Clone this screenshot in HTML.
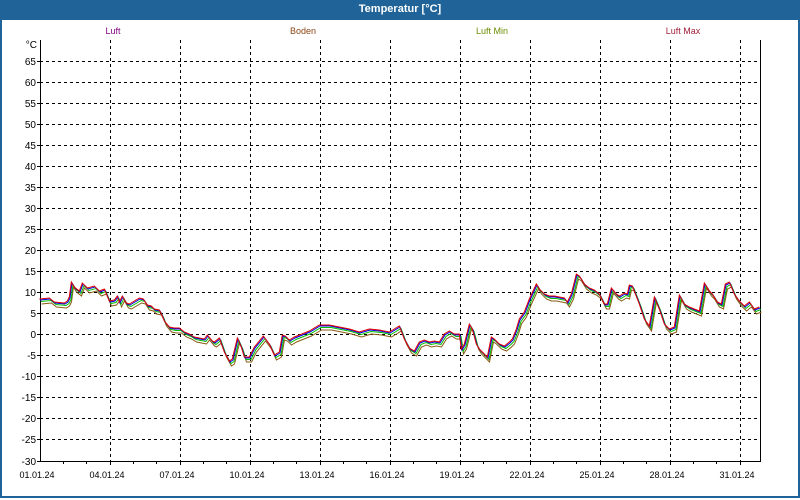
<!DOCTYPE html>
<html><head><meta charset="utf-8"><style>
body{margin:0;width:800px;height:500px;overflow:hidden;background:#fff;font-family:"Liberation Sans",sans-serif;}
.frame{position:absolute;left:0;top:0;width:796px;height:496px;border:2px solid #1f6398;border-top:none;}
.title{position:absolute;left:0;top:0;width:800px;height:20px;background:#1f6398;color:#fff;font-weight:bold;font-size:11px;text-align:center;line-height:19px;}
</style></head><body>
<div class="frame"></div>
<div class="title">Temperatur [°C]</div>
<svg width="800" height="500" style="position:absolute;left:0;top:0" font-family="Liberation Sans, sans-serif" font-size="9">
<g text-anchor="middle">
<text x="113" y="34" fill="#800080">Luft</text>
<text x="303" y="34" fill="#8b4513">Boden</text>
<text x="492" y="34" fill="#6b8e00">Luft Min</text>
<text x="683" y="34" fill="#a0203a">Luft Max</text>
</g>
<g stroke="#000" stroke-width="1" stroke-dasharray="3,3" fill="none">
<path d="M40 61.5H760M40 82.5H760M40 103.5H760M40 124.5H760M40 145.5H760M40 166.5H760M40 187.5H760M40 208.5H760M40 229.5H760M40 250.5H760M40 271.5H760M40 292.5H760M40 313.5H760M40 334.5H760M40 355.5H760M40 376.5H760M40 397.5H760M40 418.5H760M40 439.5H760"/>
<path d="M110.5 40V461M180.5 40V461M250.5 40V461M320.5 40V461M390.5 40V461M460.5 40V461M530.5 40V461M600.5 40V461M670.5 40V461M740.5 40V461"/>
</g>
<path d="M40.5 40V461.5H760.5V40" stroke="#000" fill="none"/>
<g stroke="#000"><path d="M63.5 461v3M86.5 461v3M110.5 461v4M133.5 461v3M156.5 461v3M180.5 461v4M203.5 461v3M226.5 461v3M250.5 461v4M273.5 461v3M296.5 461v3M320.5 461v4M343.5 461v3M366.5 461v3M390.5 461v4M413.5 461v3M436.5 461v3M460.5 461v4M483.5 461v3M506.5 461v3M530.5 461v4M553.5 461v3M576.5 461v3M600.5 461v4M623.5 461v3M646.5 461v3M670.5 461v4M693.5 461v3M716.5 461v3M740.5 461v4M37 61.5h3M37 82.5h3M37 103.5h3M37 124.5h3M37 145.5h3M37 166.5h3M37 187.5h3M37 208.5h3M37 229.5h3M37 250.5h3M37 271.5h3M37 292.5h3M37 313.5h3M37 334.5h3M37 355.5h3M37 376.5h3M37 397.5h3M37 418.5h3M37 439.5h3M37 461.5h3"/></g>
<g text-anchor="end" fill="#000" font-size="10">
<text x="37" y="48">°C</text>
<text x="36" y="65">65</text><text x="36" y="86">60</text><text x="36" y="107">55</text><text x="36" y="128">50</text><text x="36" y="149">45</text><text x="36" y="170">40</text><text x="36" y="191">35</text><text x="36" y="212">30</text><text x="36" y="233">25</text><text x="36" y="254">20</text><text x="36" y="275">15</text><text x="36" y="296">10</text><text x="36" y="317">5</text><text x="36" y="338">0</text><text x="36" y="359">-5</text><text x="36" y="380">-10</text><text x="36" y="401">-15</text><text x="36" y="422">-20</text><text x="36" y="443">-25</text><text x="36" y="465">-30</text>
</g>
<g text-anchor="middle" fill="#000">
<text x="37" y="478">01.01.24</text><text x="107" y="478">04.01.24</text><text x="177" y="478">07.01.24</text><text x="247" y="478">10.01.24</text><text x="317" y="478">13.01.24</text><text x="387" y="478">16.01.24</text><text x="457" y="478">19.01.24</text><text x="527" y="478">22.01.24</text><text x="597" y="478">25.01.24</text><text x="667" y="478">28.01.24</text><text x="737" y="478">31.01.24</text>
</g>
<defs>
<polyline id="d" fill="none" points="40,300 50,299 55,303 65,304 68,302 70,298 72,283 75,288 80,292 83,284 88,289 95,287 100,292 105,290 110,302 115,301 118,297 120,303 123,297 127,304 130,305 135,302 140,299 144,300 148,306 152,307 155,310 160,311 163,317 165,322 170,328 175,329 180,329 185,333 190,335 195,338 200,339 205,340 208,336 213,342 215,343 220,339 225,353 230,362 233,360 238,339 242,348 245,358 250,358 255,348 264,337 270,345 275,356 280,353 283,336 286,337 290,341 295,338 300,336 310,332 320,326 330,326 340,328 350,330 360,333 370,330 380,331 390,333 400,327 405,340 410,349 415,352 420,343 425,341 430,343 435,342 440,343 445,335 450,332 455,335 460,335 462,350 465,345 470,325 473,330 477,345 480,350 485,355 488,358 492,338 495,340 500,345 505,347 510,343 513,340 517,330 520,320 525,313 530,300 537,285 540,290 545,295 550,297 555,297 560,298 565,299 568,303 572,295 577,275 580,277 585,285 590,289 595,291 600,295 605,305 608,305 612,289 617,295 620,297 625,294 628,295 630,286 633,287 640,305 645,320 650,327 655,298 660,310 665,325 670,330 675,328 680,296 685,305 690,308 695,310 700,312 705,284 710,292 713,295 718,303 722,305 726,285 730,283 735,295 740,302 745,307 750,303 755,310 760,308"/>
</defs>
<use href="#d" stroke="#8b5a14" transform="translate(1.5,4)"/>
<use href="#d" stroke="#00c000" transform="translate(1,1.5)"/>
<use href="#d" stroke="#0000e0" transform="translate(0,0)"/>
<use href="#d" stroke="#e00000" transform="translate(-0.7,-1)"/>
</svg>
</body></html>
